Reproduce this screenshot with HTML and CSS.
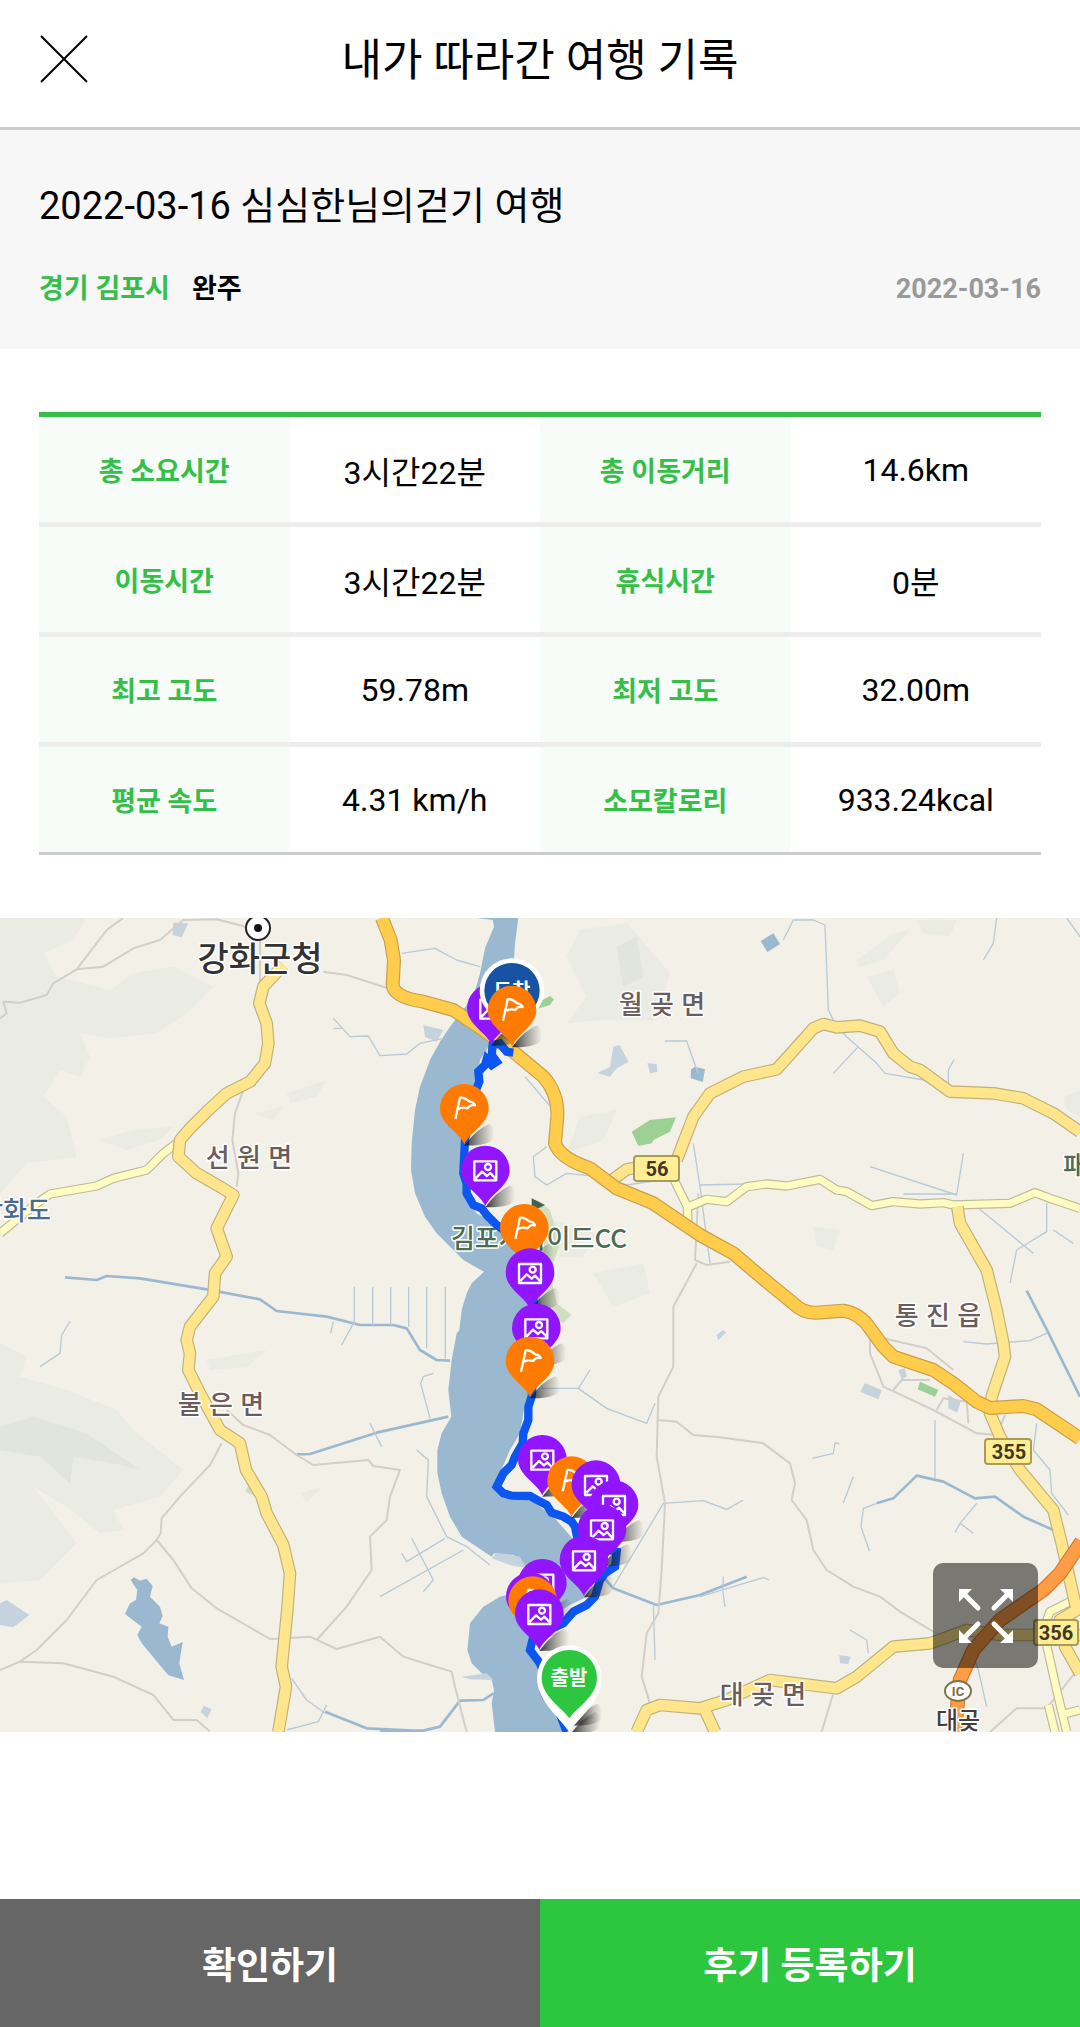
FILE: index.html
```html
<!DOCTYPE html>
<html lang="ko">
<head>
<meta charset="utf-8">
<meta name="viewport" content="width=device-width, initial-scale=1">
<title>내가 따라간 여행 기록</title>
<link rel="stylesheet" href="styles.css">
</head>
<body>
<div class="page">
  <header class="topbar">
    <button class="close" type="button" aria-label="닫기">
      <svg class="close-icon" viewBox="0 0 48 48" aria-hidden="true"><path d="M1 1L47 47M47 1L1 47"/></svg>
    </button>
    <h1 class="topbar-title">내가 따라간 여행 기록</h1>
  </header>

  <main class="content">
    <section class="summary">
      <h2 class="summary-title">2022-03-16 심심한님의걷기 여행</h2>
      <div class="summary-meta">
        <span class="region">경기 김포시</span>
        <span class="status">완주</span>
        <time class="date" datetime="2022-03-16">2022-03-16</time>
      </div>
    </section>

    <section class="stats">
      <table class="stats-table">
        <tbody>
          <tr><th scope="row">총 소요시간</th><td>3시간22분</td><th scope="row">총 이동거리</th><td>14.6km</td></tr>
          <tr><th scope="row">이동시간</th><td>3시간22분</td><th scope="row">휴식시간</th><td>0분</td></tr>
          <tr><th scope="row">최고 고도</th><td>59.78m</td><th scope="row">최저 고도</th><td>32.00m</td></tr>
          <tr><th scope="row">평균 속도</th><td>4.31 km/h</td><th scope="row">소모칼로리</th><td>933.24kcal</td></tr>
        </tbody>
      </table>
    </section>

    <section class="map">
      <svg class="map-canvas" viewBox="0 0 1080 814" role="img" aria-label="이동 경로 지도">
        <defs>
          <linearGradient id="shade" x1="0" y1="0" x2="1" y2="0">
            <stop offset="0" stop-color="#111" stop-opacity=".85"/>
            <stop offset=".5" stop-color="#222" stop-opacity=".4"/>
            <stop offset="1" stop-color="#333" stop-opacity="0"/>
          </linearGradient>
          <path id="drop" d="M0 108C-15 72-73 48-73 0A73 73 0 0 1 73 0C73 48 15 72 0 108Z"/>
          <path id="cast" d="M0 112C20 85 42 60 75 46C92 56 94 78 84 95C70 108 40 112 0 112Z" fill="url(#shade)"/>
          <g id="flag-pin">
            <use href="#cast"/>
            <use href="#drop" class="pin-orange"/>
            <path class="pin-line" d="M-27 32L-13-32C0-34 8-27 16-20C23-20 29-16 32-9C20-12 16-7 9 0C-1-4-9-2-18 2"/>
          </g>
          <g id="photo-pin">
            <use href="#cast"/>
            <use href="#drop" class="pin-purple"/>
            <path class="pin-line" d="M-33-26H33V31H-33ZM-29 25L-10 5L5 18L15 9L30 25"/>
            <circle class="pin-line" cx="8" cy="-9" r="9"/>
          </g>
        </defs>

        <rect class="land" width="1080" height="814"/>
        <g transform="translate(0 -8) scale(.333333)">
          <g class="hills">
            <path d="M0 24H260L220 90L130 130L170 200L330 240L400 190L520 170L640 230L560 310L470 370L330 385L240 370L270 440L240 500L180 480L130 560L200 620L230 740L80 760L0 850Z"/>
            <path d="M0 1300L80 1340L60 1400L200 1440L350 1500L400 1560L550 1680L480 1760L340 1800L370 1860L300 1870L200 1790L100 1730L230 1900L120 2010L0 2020Z"/>
            <path d="M300 690L400 660L520 650L480 690L380 720ZM860 550L980 510L950 560L870 580ZM760 610L850 590L820 630Z"/>
            <path d="M1740 60L1880 40L1950 120L2010 190L1960 330L1800 330L1700 340L1760 260L1700 140Z"/>
            <path d="M1740 620L1850 600L1810 690L1700 730ZM1660 930L1790 970L1750 1040L1680 1040ZM1780 1090L1930 1060L1950 1150L1840 1190Z"/>
            <path d="M2570 150L2680 70L2730 60L2650 150L2580 170ZM2600 200L2680 180L2700 250L2650 290ZM2750 30L2870 30L2850 80L2770 70ZM2440 950L2520 960L2500 1020L2450 1010ZM3190 560L3240 540V620L3200 600Z"/>
            <path d="M620 1350L800 1320L740 1370L630 1380ZM900 1750L970 1730L920 1775Z"/>
          </g>
          <path class="ridge" d="M0 1550L100 1520L260 1570L420 1680L340 1660L220 1640L210 1720L120 1640L0 1620ZM1850 110L1910 80L1930 200L1870 230Z"/>
          <g class="park">
            <path d="M1895 665L1950 630L2028 622L2010 665L1960 690L1955 700L1915 708Z"/>
            <path d="M1600 285L1650 258L1662 268L1650 285L1600 300Z"/>
            <path d="M2760 1415L2815 1440L2805 1460L2753 1438Z"/>
          </g>
          <path class="park-soft" d="M1610 870L1650 900L1680 1000L1650 1090L1670 1180L1715 1215L1690 1240L1620 1210ZM735 1745L750 1720L770 1760Z"/>

          <g class="water">
            <path d="M1430 24L1478 30L1482 50L1455 115L1440 190L1420 260L1350 350L1320 395L1290 450L1260 530L1245 600L1235 700L1233 780L1245 850L1275 920L1310 970L1345 1005L1390 1050L1452 1085L1415 1120L1400 1150L1385 1200L1378 1260L1370 1270L1355 1350L1345 1440L1354 1520L1325 1570L1312 1620L1312 1690L1325 1750L1350 1820L1385 1880L1430 1910L1475 1940L1482 1930L1540 1935L1575 1965L1580 2040L1500 2060L1450 2090L1410 2140L1402 2220L1415 2260L1445 2290L1475 2310L1482 2340L1475 2380L1485 2466H1700L1690 2430L1650 2360L1610 2260L1600 2200L1640 2130L1700 2090L1760 2060L1800 1990L1730 1900L1700 1865L1660 1820L1600 1775L1530 1755L1485 1740L1495 1700L1530 1620L1560 1570L1575 1480L1600 1420L1620 1350L1625 1230L1620 1150L1590 1050L1540 990L1500 950L1430 910L1395 860L1385 800L1390 720L1400 640L1430 540L1440 450L1500 360L1540 180L1545 100L1555 24Z"/>
            <path d="M392 2010L402 2002L420 2012L440 2006L458 2028L450 2060L480 2090L488 2118L478 2140L505 2150L503 2180L515 2210L548 2196L538 2260L552 2310L505 2296L425 2200L412 2175L425 2150L375 2112L390 2080L408 2070L412 2040Z"/>
            <path d="M2282 93L2320 70L2340 102L2302 126ZM2073 478L2085 470L2115 478L2108 516L2072 505Z"/>
          </g>
          <g class="water-soft">
            <path d="M520 38L565 40L545 82L518 75ZM0 2080L20 2070L88 2115L40 2152L0 2145ZM602 2405L612 2387L635 2398L622 2425ZM1792 490L1830 470L1840 410L1858 405L1886 455L1850 475L1830 500ZM1942 460L1970 462L1972 485L1950 490ZM1270 345L1330 360L1310 395L1275 380Z"/>
            <path d="M2580 1445L2595 1420L2645 1440L2635 1468ZM2845 1455L2882 1475L2872 1508L2845 1495ZM2695 1380L2715 1375L2720 1400L2705 1408ZM2518 2235L2552 2240L2545 2262L2520 2260ZM2150 1275L2170 1260L2178 1268L2155 1290Z"/>
            <path d="M1475 1945L1490 1928L1560 1940L1580 1975L1530 1965ZM1385 2300L1460 2290L1480 2310L1410 2308Z"/>
          </g>

          <g class="stream-wide">
            <path d="M195 1102L290 1110L320 1098L420 1105L620 1138L780 1168L830 1203L980 1220L1080 1245L1180 1245L1220 1255L1260 1320L1310 1350L1350 1352"/>
            <path d="M1140 2462L1270 2462L1320 2450L1380 2372L1450 2370L1480 2350M975 2405L1100 2455L1240 2462"/>
            <path d="M890 1633L930 1632L1130 1568L1345 1520"/>
            <path d="M2630 1780L2680 1765L2750 1697L2830 1715L2925 1765L2985 1760L3070 1820L3160 1860M3080 1142L3140 1258L3240 1460"/>
            <path d="M1800 1990L1840 2035L1970 2085L2100 2055L2240 2000"/>
          </g>
          <g class="stream">
            <path d="M1000 325L1050 380L1105 378L1140 437L1220 432L1260 400L1330 385M1000 355L1025 355"/>
            <path d="M1063 1130V1245M1118 1130V1245M1172 1130V1245M1226 1130V1250M1280 1130V1315M1336 1130V1345M1060 1240L1025 1305M1000 1235L992 1270"/>
            <path d="M210 1234L185 1275L180 1330L120 1370M1205 130L1305 115L1370 150L1440 170M1460 410L1450 490M1575 500L1660 600M1640 710L1600 740L1605 800L1640 825L1700 790L1800 800L1880 825L1980 810"/>
            <path d="M1300 1390L1270 1400L1262 1420L1290 1525M1250 1620L1285 1650L1280 1760L1340 1880L1400 1910L1470 1965M1140 2060L1390 1920M1205 1930L1220 1955L1335 1885M1235 1885L1300 2010L1270 2045"/>
            <path d="M1625 1435L1735 1435L1820 1495L1940 1540L1965 1480M1735 1435L1770 1380M1840 2030L1990 1780L2110 1772L2180 1798L2230 1770M1960 2080L1965 2250"/>
            <path d="M2350 90L2380 30L2440 30L2475 45L2485 300L2510 350L2540 380L2630 460L2655 490L2790 513M2575 410L2500 490M2990 24L2980 100L2950 150M3200 24L3240 80M2845 520V480L2862 450"/>
            <path d="M2100 825L2240 822M2610 770L2870 855L2890 730M2710 852H2870M2930 890L3100 1030M3140 880V965L3050 1020L3030 1120M3160 960L3220 1000"/>
            <path d="M1995 393L2060 393L2080 450L2095 490M2080 700L2100 830L2130 1060M2890 1295L2960 1302L3090 1292L3140 1270M2437 1645L2500 1630L2505 1598L2518 1602M2590 1922M2608 1922L2583 1850L2590 1795L2630 1780M2530 1778L2560 1700M2805 1530V1705M2930 1780L2880 1840L2920 1870M2880 1840L2865 1868"/>
            <path d="M2100 2060L2290 2003L2308 2010M2170 2000L2168 2040L2175 2090M2550 2160L2600 2190L2605 2230M875 2305L920 2370L975 2410M860 2460L955 2435L980 2385M1110 1540L1145 1610M2900 2180L2935 2280L2960 2390M3110 1540L3100 1620L3150 1680L3155 1750L3205 1815"/>
          </g>
          <g class="lane">
            <path d="M0 325L20 310L10 275L60 278L140 255L160 220L230 178L320 60L370 24M230 178L310 170L400 115L480 90L550 30L650 28L730 48L780 90V220"/>
            <path d="M970 185L1040 195L1180 240M730 540L705 610L697 690L715 790L710 830"/>
            <path d="M665 1600L630 1665L540 1760L485 1825L482 1870L470 1890L430 1930L290 2010L200 2130L110 2220L60 2255L0 2280M470 1890L520 1950L575 2035L650 2095L810 2187L930 2180L1010 2217L1140 2180L1210 2240L1290 2265L1355 2285L1365 2330L1400 2466M60 2255L190 2260L340 2300L460 2355L520 2430L590 2430L630 2465"/>
            <path d="M680 1500L730 1545L810 1575L890 1635L940 1665L1105 1650L1120 1668L1200 1680L1170 1760L1160 1830L1110 1880L1115 1980L1040 2090L950 2190"/>
            <path d="M2090 1060L2020 1190L2020 1370L1975 1460L1970 1640L1995 1780L1985 1980L1975 2110L1940 2170L1925 2300L1950 2380M1975 1530L2030 1535L2080 1575L2160 1582L2290 1600L2370 1660L2385 1720L2375 1770L2420 1830L2440 1920L2480 1980L2560 2030L2640 2060L2700 2105L2800 2165"/>
            <path d="M2095 850L2085 1050L2120 1065L2190 1055M2610 1275L2610 1330L2650 1430L2800 1500L2930 1570L2990 1575L3015 1515M2650 1285L2780 1315L2860 1380M2680 1440L2705 1410L2790 1410M2810 1500L2830 1465L2900 1475L2905 1540M2500 2350L2465 2466M2970 2466L3050 2395H3140L3240 2270"/>
          </g>

          <g class="road-edge road-pale"><path id="pale1" d="M530 700L490 730L440 780L340 805L290 828L150 852L110 880L0 970M2018 800L2062 890L2064 940M2062 892L2120 868L2180 875L2240 830L2300 822L2360 828L2460 808L2510 840L2540 845L2615 887L2680 875L2760 882L2830 878L2860 885L3030 880L3105 848L3150 865L3240 895M3240 2060L3150 2105L3130 2160L3170 2340L3200 2466M3145 2385L3165 2466M3240 2400L3180 2415"/></g>
          <use href="#pale1" class="road-fill pale-fill"/>
          <g class="road-edge"><path id="yellow1" d="M850 165L790 230L778 280L800 340L805 400L795 460L750 515L680 550L620 605L570 655L540 690L535 740L590 790L660 830L700 855L650 955L680 1040L645 1090L640 1160L570 1250L560 1290L570 1330L565 1380L600 1450L660 1560L720 1600L738 1680L785 1760L800 1810L850 1905L870 1990L862 2100L845 2270L858 2330L835 2466M1830 815L1880 778L1960 765M2030 750L2080 620L2130 550L2230 500L2330 478L2400 400L2440 355L2470 342L2510 352L2580 347L2640 365L2680 430L2730 470L2760 480L2850 545L2980 550L3070 565L3160 610L3240 665M2872 890L2880 940L2960 1080L2990 1200L3010 1300L3015 1340L2975 1460L2970 1510L3000 1580L3060 1680L3160 1800L3185 1900L3230 2100L3180 2130L3195 2210L3240 2290M1910 2466L1940 2400L1980 2385L2100 2395L2180 2370L2310 2310L2510 2335L2570 2300L2680 2210L2790 2200L2900 2160L3000 2175H3240M2110 2390L2145 2466"/></g>
          <use href="#yellow1" class="road-fill yellow-fill"/>
          <g class="road-edge road-amber"><path id="amber1" d="M1146 24L1172 90L1182 150L1178 225Q1182 262 1270 275L1360 300L1450 360L1540 425L1630 500Q1675 550 1672 620L1665 700Q1680 745 1770 775L1850 835L1960 880L2100 975L2200 1030L2300 1115L2380 1180Q2410 1210 2450 1208L2530 1202Q2580 1210 2610 1255L2650 1310L2680 1340L2800 1380L2860 1420L2930 1475L2970 1494L3070 1488L3110 1498L3240 1585"/></g>
          <use href="#amber1" class="road-fill amber-fill"/>
          <g class="road-edge road-highway"><path id="highway1" d="M3245 1895L3180 1990L3130 2040L3000 2130L2920 2220L2880 2310L2864 2466"/></g>
          <use href="#highway1" class="road-fill highway-fill"/>
        </g>

        <g class="place">
          <text class="place-city" x="260" y="53">강화군청</text>
          <text x="249" y="249">선 원 면</text>
          <text x="662" y="96">월 곶 면</text>
          <text x="938" y="407">통 진 읍</text>
          <text x="221" y="496">불 은 면</text>
          <text x="763" y="786">대 곶 면</text>
          <text class="place-island" x="15" y="302">강화도</text>
          <text class="place-golf" x="539" y="330">김포시사이드CC</text>
          <text class="place-golf" x="1075" y="257">패</text>
          <text class="place-exit" x="958" y="811">대곶</text>
        </g>
        <circle class="office" cx="258" cy="10" r="12"/>
        <circle class="office-dot" cx="258" cy="10" r="4"/>
        <g class="shield">
          <rect x="634" y="238" width="45" height="25" rx="3"/><text x="657" y="258">56</text>
          <rect x="985" y="521" width="46" height="25" rx="3"/><text x="1009" y="541">355</text>
          <rect x="1034" y="702" width="44" height="25" rx="3"/><text x="1056" y="722">356</text>
        </g>
        <ellipse class="exit" cx="958" cy="773" rx="13" ry="10"/>
        <text class="exit-text" x="958" y="778">IC</text>

        <g transform="translate(0 -8) scale(.333333)">
          <path class="route" d="M1540 428L1520 425L1500 400L1478 405L1475 435L1490 455L1475 465L1460 448L1455 465L1435 485L1438 515L1428 540L1410 610L1395 690L1390 790L1400 820L1400 850L1420 885L1445 895L1460 915L1490 945L1540 980L1590 1080L1610 1250L1595 1460L1585 1490L1585 1530L1570 1570L1568 1600L1545 1640L1535 1665L1510 1690L1490 1730L1510 1750L1535 1757L1590 1758L1615 1772L1640 1785L1655 1808L1690 1820L1715 1835L1725 1850L1735 1900L1850 1925L1845 1970L1815 1990L1800 2010L1785 2060L1760 2085L1720 2105L1690 2140L1600 2180L1590 2220L1620 2260L1660 2360L1700 2466"/>
          <path class="golf-flag" d="M1595 865L1635 885L1595 905Z"/>
          <use href="#photo-pin" x="1474" y="295"/>
          <path class="pin-white" d="M0 150C-25 92-97 65-97 0A97 97 0 0 1 97 0C97 65 25 92 0 150Z" transform="translate(1536 242)"/>
          <circle class="pin-navy" cx="1536" cy="242" r="83"/>
        </g>
        <text class="pin-text" x="512" y="80">도착</text>
        <g transform="translate(0 -8) scale(.333333)">
          <use href="#flag-pin" x="1536" y="300"/>
          <use href="#flag-pin" x="1393" y="595"/>
          <use href="#photo-pin" x="1456" y="780"/>
          <use href="#flag-pin" x="1573" y="955"/>
          <use href="#photo-pin" x="1590" y="1088"/>
          <use href="#photo-pin" x="1609" y="1254"/>
          <use href="#flag-pin" x="1590" y="1353"/>
          <use href="#photo-pin" x="1627" y="1648"/>
          <use href="#flag-pin" x="1715" y="1712"/>
          <use href="#photo-pin" x="1788" y="1724"/>
          <use href="#photo-pin" x="1842" y="1784"/>
          <use href="#photo-pin" x="1806" y="1857"/>
          <use href="#photo-pin" x="1752" y="1950"/>
          <use href="#photo-pin" x="1627" y="2020"/>
          <use href="#photo-pin" x="1591" y="2060"/>
          <use href="#flag-pin" x="1598" y="2072"/>
          <use href="#photo-pin" x="1618" y="2111"/>
          <use href="#photo-pin" x="1690" y="2330"/>
          <use href="#flag-pin" x="1717" y="2335"/>
          <use href="#cast" x="1712" y="2360"/>
          <path class="pin-white" d="M0 165C-20 125-97 75-97 0A97 97 0 0 1 97 0C97 75 20 125 0 165Z" transform="translate(1708 2303)"/>
          <path class="pin-green" d="M0 122C-20 90-83 58-83 0A83 83 0 0 1 83 0C83 58 20 90 0 122Z" transform="translate(1708 2303)"/>
        </g>
        <text class="pin-text" x="569" y="767">출발</text>
      </svg>
      <button class="expand" type="button" aria-label="지도 크게 보기">
        <svg class="expand-icon" viewBox="0 0 54 54" aria-hidden="true">
          <path class="expand-line" d="M7 7L19 19M47 7L35 19M7 47L19 35M47 47L35 35"/>
          <path class="expand-head" d="M0 0H13L0 13ZM54 0V13L41 0ZM0 54V41L13 54ZM54 54H41L54 41Z"/>
        </svg>
      </button>
    </section>
  </main>

  <footer class="actions">
    <button class="action action-confirm" type="button">확인하기</button>
    <button class="action action-review" type="button">후기 등록하기</button>
  </footer>
</div>
</body>
</html>
```
FILE: styles.css
```css
* { box-sizing: border-box; }

body {
  margin: 0;
  background: #fff;
  color: #000;
  font-family: Roboto, "Noto Sans CJK KR", sans-serif;
}

button {
  margin: 0;
  padding: 0;
  border: 0;
  background: none;
  font: inherit;
  cursor: pointer;
}

.page {
  display: flex;
  flex-direction: column;
  min-height: 100vh;
}

.topbar {
  display: grid;
  grid-template-columns: 48px 1fr 48px;
  align-items: start;
  height: 130px;
  padding: 29px 40px 0;
  border-bottom: 3px solid #ccc;
}

.close { width: 48px; height: 48px; margin-top: 6px; }
.close-icon { display: block; fill: none; stroke: #000; stroke-width: 2; }

.topbar-title {
  margin: 0;
  font-size: 44px;
  line-height: 64px;
  font-weight: 400;
  text-align: center;
}

.content { flex: 1; }

.summary {
  padding: 42px 39px 40px;
  background: #f7f7f7;
}

.summary-title {
  margin: 0;
  font-size: 38px;
  line-height: 68px;
  font-weight: 400;
}

.summary-meta {
  display: flex;
  align-items: center;
  gap: 22px;
  margin-top: 29px;
  font-size: 27px;
  line-height: 40px;
  font-weight: 700;
}

.region { color: #35bf49; }
.date { margin-left: auto; color: #999; }

.stats { padding: 63px 39px; }

.stats-table {
  width: 100%;
  table-layout: fixed;
  border-collapse: separate;
  border-spacing: 0;
  border-top: 5px solid #35bf49;
  border-bottom: 3px solid #ccc;
  text-align: center;
}

.stats-table th,
.stats-table td {
  height: 110px;
  padding: 0;
  border-bottom: 5px solid #ededed;
}

.stats-table tr:last-child th,
.stats-table tr:last-child td {
  height: 105px;
  border-bottom: 0;
}

.stats-table th { background: #f7fcf9; color: #35bf49; font-size: 27px; font-weight: 700; }
.stats-table td { font-size: 32px; font-weight: 400; }

.map { position: relative; }
.map-canvas { display: block; width: 100%; height: auto; }

.land { fill: #f3f0e7; }
.hills { fill: #eaebe2; }
.ridge { fill: #e1e5dd; }
.park { fill: #9dd095; }
.park-soft { fill: #cfdfc0; }
.water { fill: #9ab9d1; }
.water-soft { fill: #c4d3dd; }
.stream, .stream-wide, .lane { fill: none; stroke-linejoin: round; }
.stream { stroke: #b7cad7; stroke-width: 4; }
.stream-wide { stroke: #9ab9d1; stroke-width: 8; }
.lane { stroke: #d2cfcb; stroke-width: 6; }

.road-edge, .road-fill { fill: none; stroke-linejoin: round; }
.road-edge { stroke: #beb17b; stroke-width: 38; }
.road-pale { stroke: #bebb9a; stroke-width: 28; }
.road-amber { stroke: #c79f4c; stroke-width: 42; }
.road-highway { stroke: #d37836; stroke-width: 44; }
.pale-fill { stroke: #fffcc2; stroke-width: 21; }
.yellow-fill { stroke: #ffe68c; stroke-width: 31; }
.amber-fill { stroke: #ffcc4c; stroke-width: 35; }
.highway-fill { stroke: #ff9d47; stroke-width: 37; }

.place {
  fill: #6a5d5b;
  stroke: #fff;
  stroke-width: 3px;
  stroke-linejoin: round;
  paint-order: stroke;
  font-family: "Noto Sans CJK KR", sans-serif;
  font-size: 26px;
  font-weight: 500;
  text-anchor: middle;
}
.place-city { fill: #333; font-size: 34px; }
.place-island { fill: #4a6b8c; }
.place-golf { fill: #4c6b50; }
.place-exit { fill: #453d3b; font-size: 24px; }

.office { fill: #fff; stroke: #222; stroke-width: 2; }
.office-dot { fill: #111; }

.shield rect { fill: #ffee94; stroke: #aa9c58; stroke-width: 2; }
.shield text { fill: #40391f; font-size: 20px; font-weight: 700; text-anchor: middle; }

.exit { fill: #fff; stroke: #80724b; stroke-width: 2; }
.exit-text { fill: #80663d; font-size: 13px; font-weight: 700; text-anchor: middle; }

.route { fill: none; stroke: #0b55f0; stroke-width: 25; }
.golf-flag { fill: #456250; }
.pin-orange { fill: #ff7a00; }
.pin-purple { fill: #9115ff; }
.pin-white { fill: #fff; }
.pin-navy { fill: #1753a2; }
.pin-green { fill: #2dc73f; }
.pin-line { fill: none; stroke: #fff; stroke-width: 7; stroke-linejoin: round; }
.pin-text { fill: #fff; font-size: 20px; font-weight: 700; text-anchor: middle; }

.expand {
  position: absolute;
  right: 42px;
  bottom: 64px;
  display: grid;
  place-items: center;
  width: 105px;
  height: 105px;
  border-radius: 10px;
  background: rgba(0, 0, 0, .5);
}
.expand-icon { width: 54px; height: 54px; }
.expand-line { fill: none; stroke: #fff; stroke-width: 5; stroke-linecap: round; }
.expand-head { fill: #fff; }

.actions {
  display: grid;
  grid-template-columns: 1fr 1fr;
}

.action {
  height: 128px;
  color: #fff;
  font-size: 37px;
  font-weight: 700;
}
.action-confirm { background: #666; }
.action-review { background: #2dc73f; }
```
